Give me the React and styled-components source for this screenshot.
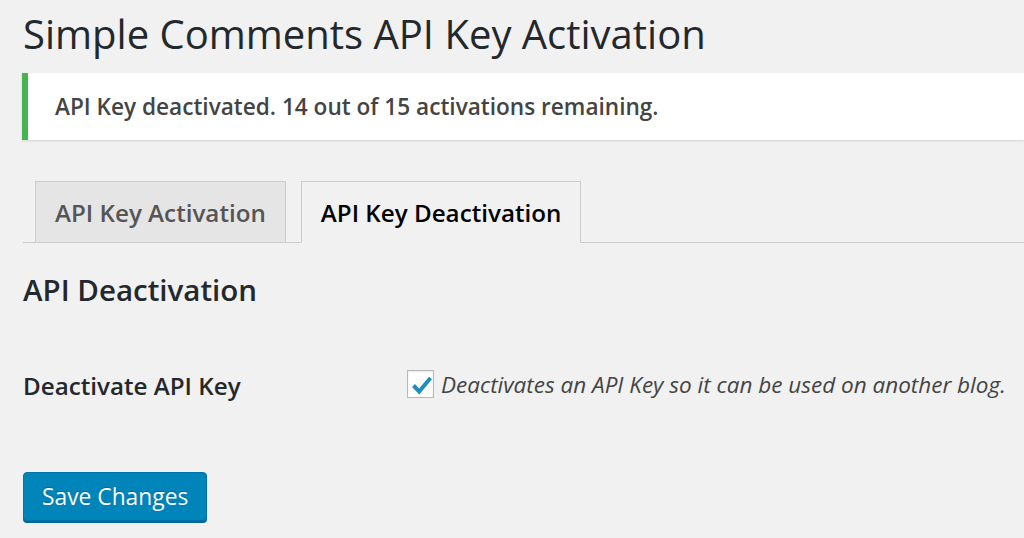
import React from "react";
import styled, { createGlobalStyle } from "styled-components";

const Global = createGlobalStyle`
  html, body {
    margin: 0;
    padding: 0;
    background: #f1f1f1;
    font-family: "Open Sans", "Liberation Sans", sans-serif;
    color: #23282d;
  }
  * { box-sizing: border-box; }
`;

const Wrap = styled.div`
  padding: 8px 0 0 23px;
  width: 1024px;
  height: 538px;
  overflow: hidden;
`;

const Title = styled.h1`
  margin: 0;
  font-size: 40px;
  font-weight: 400;
  line-height: 52px;
  color: #23282d;
`;

const Notice = styled.div`
  margin: 13px 0 0 -1px;
  height: 67px;
  background: #fff;
  border-left: 6px solid #46b450;
  box-shadow: 0 1px 2px rgba(0, 0, 0, 0.12);
  display: flex;
  align-items: center;
  padding-left: 27px;
  font-size: 22.6px;
  font-weight: 600;
  color: #444;
`;

const TabBar = styled.div`
  margin-top: 41px;
  display: flex;
  align-items: flex-end;
  gap: 15px;
  padding-left: 12px;
  border-bottom: 1.5px solid #ccc;
`;

const Tab = styled.div`
  height: 62px;
  margin-bottom: -1.5px;
  padding: 0 19px;
  display: flex;
  align-items: center;
  font-size: 24.2px;
  font-weight: 600;
  border: 1.5px solid #ccc;
  border-bottom-color: ${(p) => (p.active ? "#f1f1f1" : "#ccc")};
  background: ${(p) => (p.active ? "#f1f1f1" : "#e5e5e5")};
  color: ${(p) => (p.active ? "#000" : "#555")};
`;

const Heading = styled.h2`
  margin: 28px 0 0;
  font-size: 29.5px;
  font-weight: 600;
  line-height: 38px;
  color: #23282d;
`;

const Row = styled.div`
  margin-top: 58px;
  display: flex;
  align-items: center;
`;

const Label = styled.div`
  width: 384px;
  font-size: 24.2px;
  font-weight: 600;
  color: #23282d;
  padding-top: 2px;
`;

const Box = styled.span`
  width: 27px;
  height: 28px;
  border: 1.5px solid #b4b9be;
  background: #fff;
  box-shadow: inset 0 1px 2px rgba(0, 0, 0, 0.1);
  display: flex;
  align-items: center;
  justify-content: center;
  margin-right: 7px;
`;

const Desc = styled.span`
  font-size: 22.5px;
  font-style: italic;
  color: #444;
`;

const Button = styled.button`
  margin-top: 70px;
  height: 49px;
  padding: 0 18px;
  font-family: "Open Sans", "Liberation Sans", sans-serif;
  font-size: 22.8px;
  color: #fff;
  background: #0085ba;
  border: 1.5px solid #0073aa;
  border-radius: 4px;
  box-shadow: 0 2px 0 #006799;
  text-shadow: 0 -1px 1px #006799;
  cursor: pointer;
`;

export default function App() {
  return (
    <>
      <Global />
      <Wrap>
        <Title>Simple Comments API Key Activation</Title>
        <Notice>API Key deactivated. 14 out of 15 activations remaining.</Notice>
        <TabBar>
          <Tab>API Key Activation</Tab>
          <Tab active>API Key Deactivation</Tab>
        </TabBar>
        <Heading>API Deactivation</Heading>
        <Row>
          <Label>Deactivate API Key</Label>
          <Box>
            <svg width="24" height="25" viewBox="0 0 24 25">
              <path
                d="M4.5 13.5L10.2 19.5L21.5 6"
                fill="none"
                stroke="#1e8cbe"
                strokeWidth="4"
                strokeLinejoin="miter"
              />
            </svg>
          </Box>
          <Desc>Deactivates an API Key so it can be used on another blog.</Desc>
        </Row>
        <Button>Save Changes</Button>
      </Wrap>
    </>
  );
}
